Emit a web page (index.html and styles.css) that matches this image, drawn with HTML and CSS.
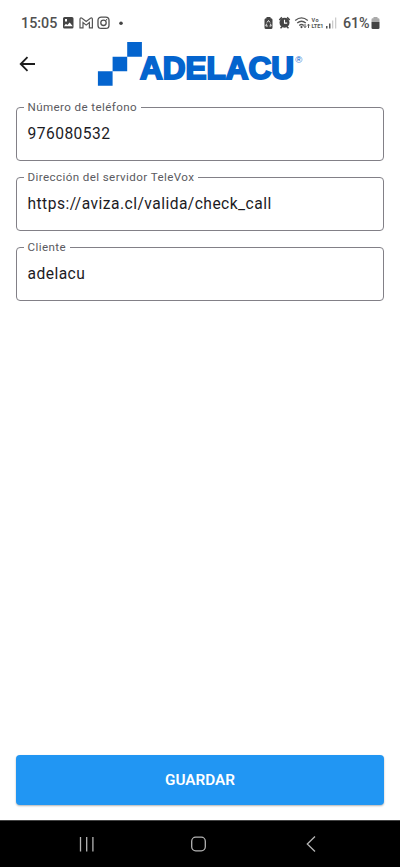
FILE: index.html
```html
<!DOCTYPE html>
<html lang="es">
<head>
<meta charset="utf-8">
<meta name="viewport" content="width=device-width, initial-scale=1">
<title>Adelacu</title>
<link rel="stylesheet" href="styles.css">
</head>
<body>
<div class="status">
  <span class="time">15:05</span>
  <svg class="apps" width="66" height="14" viewBox="0 0 66 14">
    <path fill="#444" fill-rule="evenodd" d="M3.500 1h7.500q1.500 0 1.500 1.500v8.500q0 1.500-1.500 1.500h-7.500q-1.500 0-1.500-1.500v-8.500q0-1.500 1.500-1.500zM3 10.200h8.800L8.700 6.500 6.300 9 4.900 7.700zM4 3v2.500h2V3z"/>
    <path fill="none" stroke="#555" stroke-width="1.200" d="M19 11.800V3.200q.3-1.800 2-1l4.200 3.200 4.200-3.200q1.700-.8 2 1v8.600h-3V6.600l-3.200 2.500-3.200-2.500v5.200z"/>
    <g fill="none" stroke="#505050" stroke-width="1.300"><rect x="37" y="1.100" width="11" height="11.300" rx="3.200"/><circle cx="42.500" cy="6.800" r="2.700"/></g>
    <circle cx="45.600" cy="3.700" r=".7" fill="#555"/><circle cx="60" cy="7.300" r="1.800" fill="#444"/>
  </svg>
  <svg class="signals" width="76" height="16" viewBox="0 0 76 16">
    <path fill="#444" d="M3.500 2h4v1.300h.5q1.500 0 1.500 1.500v7.700q0 1.500-1.500 1.500h-5q-1.500 0-1.500-1.500V4.800q0-1.500 1.500-1.500h.5z"/>
    <path fill="none" stroke="#fff" stroke-width=".9" d="M4 7.500l1.500-2 1.500 2M3.600 8.700l-.8 2.300h2M7.400 8.700l.8 2.300H6.500"/>
    <path fill="none" stroke="#444" stroke-width="1.500" d="M16.300 5l2.600-2.600M26.700 5l-2.600-2.600M17.500 13.200l1.500-1.500M25.500 13.200l-1.500-1.500"/>
    <circle cx="21.500" cy="7.800" r="5" fill="#444"/><path fill="none" stroke="#fff" stroke-width="1.100" d="M21.500 4.800v3.300h2.700"/>
    <g fill="none" stroke="#555" stroke-width="1.300"><path d="M32.200 5.500q6.300-5.200 12.600 0M34.200 8q4.300-3.500 8.600 0M36.200 10.400q2.300-1.800 4.600 0"/></g>
    <circle cx="38.500" cy="12.100" r="1.100" fill="#444"/>
    <path fill="none" stroke="#555" d="M42 9v3.500m-1.200-1.200L42 12.600l1.200-1.300M45.500 13V9.200m-1.200 1.300l1.200-1.300 1.200 1.300"/>
    <text x="48.500" y="7.300" class="tiny" textLength="7">Vo</text>
    <text x="48.500" y="13" class="tiny" textLength="12">LTE1</text>
    <path fill="#555" d="M63 11h1.500v2.500H63zM66 8.500h1.500v5H66z"/><path fill="#ccc" d="M69 5.500h1.300v8H69zM72 2.500h1.300v11H72z"/>
  </svg>
  <span class="pct">61%</span>
  <svg class="battery" width="9" height="14" viewBox="0 0 9 14"><path fill="#aaa" d="M2.500 1h4v1.300h.7q1.300 0 1.300 1.300V6h-8V3.600q0-1.300 1.300-1.300h.7z"/><path fill="#444" d="M.5 6h8v5.700q0 1.300-1.300 1.300H1.800Q.5 13 .5 11.700z"/></svg>
</div>
<header class="bar">
  <svg class="back" width="18" height="18" viewBox="0 0 18 18"><path fill="none" stroke="#1c1c1c" stroke-width="1.800" d="M17 9H3M9.500 2.200L2.700 9l6.800 6.800"/></svg>
  <svg class="logo" width="210" height="46" viewBox="0 0 210 46">
    <path fill="#0464ce" d="M2.900 31.200h14.700v14.600H2.900zM17.600 16.700h14.600v14.500H17.600zM32.200 2.100h14.700v14.600H32.200z"/>
    <text class="word" x="45" y="38.700" textLength="154" lengthAdjust="spacingAndGlyphs">ADELACU</text>
    <text class="reg" x="200.200" y="23">®</text>
  </svg>
</header>
<main class="form">
  <fieldset class="field"><legend>Número de teléfono</legend><div class="value">976080532</div></fieldset>
  <fieldset class="field"><legend>Dirección del servidor TeleVox</legend><div class="value">https://aviza.cl/valida/check_call</div></fieldset>
  <fieldset class="field"><legend>Cliente</legend><div class="value">adelacu</div></fieldset>
  <button class="save" type="button">GUARDAR</button>
</main>
<nav class="nav">
  <svg width="400" height="46" viewBox="0 0 400 46" fill="none" stroke="#b4b4b4" stroke-width="1.300">
    <path d="M80.500 16v14.500M86.700 16v14.500M92.900 16v14.500M315 15.500L307.300 23l7.700 7.500"/>
    <rect x="191.700" y="16.200" width="13.600" height="13.600" rx="4"/>
  </svg>
</nav>
</body>
</html>
```
FILE: styles.css
```css
* { box-sizing: border-box; }
body {
  margin: 0;
  height: 867px;
  display: flex;
  flex-direction: column;
  background: #fff;
  color: #1c1b1f;
  font-family: Roboto, sans-serif;
}
svg { display: block; flex: none; }
.status {
  height: 40px;
  padding: 6px 20px 0 21px;
  display: flex;
  align-items: center;
  color: #505050;
  font-size: 14.3px;
  font-weight: 500;
}
.time { width: 40px; }
.signals { margin-left: 136px; }
.pct { margin-left: 4px; width: 28px; letter-spacing: -0.1px; }
.tiny { font: 700 5.500px Roboto, sans-serif; fill: #555; }
.bar {
  height: 60px;
  padding-left: 18px;
  display: flex;
  align-items: flex-start;
}
.back { margin-top: 15px; }
.logo { margin-left: 59px; }
.word {
  font: 700 31px "Liberation Sans", Arial, sans-serif;
  fill: #0464ce;
  stroke: #0464ce;
  stroke-width: 2px;
}
.reg { font: 9.500px "Liberation Sans", Arial, sans-serif; fill: #0464ce; }
.form {
  flex: 1;
  padding: 0 16px 15.500px;
  display: flex;
  flex-direction: column;
  gap: 9px;
}
.field {
  margin: 0;
  padding: 0 6.500px;
  min-width: 0;
  height: 61px;
  border: 1px solid #828087;
  border-radius: 4px;
}
.field legend {
  padding: 0 4px;
  height: 14px;
  line-height: 14px;
  color: #5a5a60;
  font-size: 11.600px;
  letter-spacing: 0.4px;
}
.value {
  padding: 10px 4px 0;
  line-height: 20px;
  font-size: 15.600px;
  letter-spacing: 0.46px;
}
.save {
  margin-top: auto;
  height: 49.500px;
  border: 0;
  border-radius: 4px;
  background: #2196f3;
  box-shadow: 0 1px 2px rgba(0, 0, 0, 0.3);
  color: #fff;
  font: 600 15.300px Roboto, sans-serif;
}
.nav {
  height: 47px;
  background: #000;
  border-top: 1px solid #444;
}
```
